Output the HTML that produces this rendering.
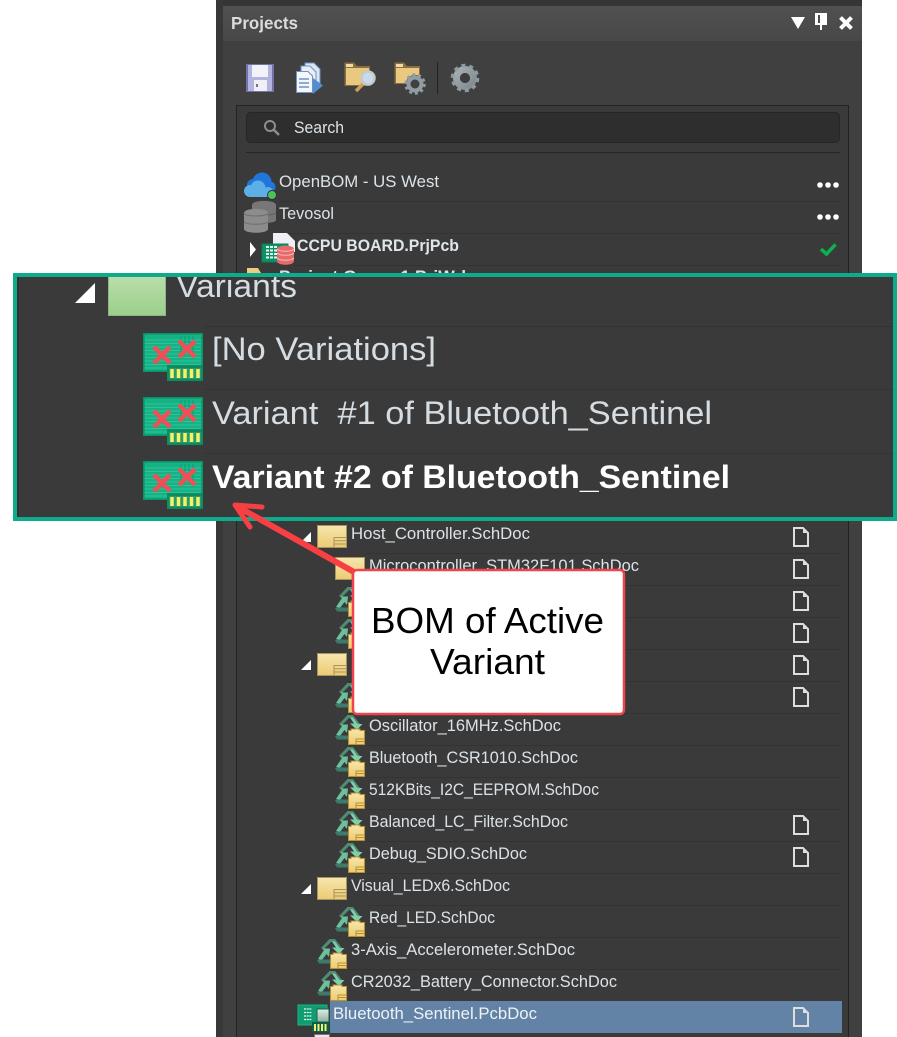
<!DOCTYPE html>
<html><head><meta charset="utf-8"><style>
html,body{margin:0;padding:0;background:#fff;width:897px;height:1037px;overflow:hidden}
svg{display:block}
text{font-family:"Liberation Sans",sans-serif}
.t{font-size:16.5px;fill:#dbe3e8}
.z{font-size:32px;fill:#d5dde2}
.l{stroke:#333;stroke-width:1}
</style></head><body>
<svg width="897" height="1037" viewBox="0 0 897 1037" xmlns="http://www.w3.org/2000/svg">
<defs>
<linearGradient id="ft" x1="0" y1="0" x2="0" y2="1"><stop offset="0" stop-color="#f7e6ae"/><stop offset="1" stop-color="#eccb72"/></linearGradient>
<linearGradient id="gf" x1="0" y1="0" x2="0" y2="1"><stop offset="0" stop-color="#c0dfb0"/><stop offset="1" stop-color="#9ad08a"/></linearGradient>
<linearGradient id="hd" x1="0" y1="0" x2="0" y2="1"><stop offset="0" stop-color="#505050"/><stop offset="1" stop-color="#484848"/></linearGradient>
<linearGradient id="gr" x1="0" y1="0" x2="1" y2="1"><stop offset="0" stop-color="#a5aeb2"/><stop offset="1" stop-color="#7f8a8f"/></linearGradient>
<linearGradient id="chip" x1="0" y1="0" x2="0" y2="1"><stop offset="0" stop-color="#dfeee6"/><stop offset="1" stop-color="#8fb09f"/></linearGradient>
<g id="doc"><path d="M1 1H10L15 6V19H1Z" fill="none" stroke="#dedede" stroke-width="2"/><path d="M10 1V6H15Z" fill="#dedede"/></g>
<g id="fold"><rect x=".5" y=".5" width="29" height="22" fill="url(#ft)" stroke="#a8945e"/><path d="M17 22.5V12.5H29.5M17 15.800H29.500M17 19H29.500" fill="none" stroke="#a8945e"/></g>
<g id="rec">
<path d="M5 9L8 10L15 3H19L23 10L26 9L19 0H13.500Z" fill="#4f8c76"/>
<path d="M16 2.500H19L23.500 9H28.500L23 15L16 8.500H20Z" fill="#7ed0a8"/>
<path d="M2 20L8 11L5.500 9.500H14L13 18L10.500 15L6 21Z" fill="#6cc09a"/>
<path d="M1 21L3 24.500H14V20.500H4Z" fill="#3f7a68"/>
<path d="M14.500 15.500H17V14H26V15.500H30.500V29.500H14.500Z" fill="url(#ft)" stroke="#b8902e"/>
<path d="M22 29V24H30M22 26.500H30" fill="none" stroke="#b8902e"/>
</g>
<g id="bom">
<path d="M0 0H60V48H24V39H0Z" fill="#0a9268"/>
<rect x="1.500" y="1.500" width="57" height="36" fill="#14b386"/>
<path d="M2 7H58M2 10.500H58M2 14H58M2 17.500H58M2 21H58M2 24.500H58M2 28H58M2 31.500H58M2 35H58" stroke="#35c096" stroke-width="1"/>
<path d="M38 3V22M42 3V22M46 3V22M50 3V22" stroke="#0e9a72" stroke-width="1"/>
<rect x="24" y="32" width="36" height="16" fill="#0a8d62"/>
<rect x="26" y="35" width="32" height="11" fill="#2c9a66"/>
<path d="M29 36V45M35.500 36V45M42 36V45M48.500 36V45M55 36V45" stroke="#f3f26a" stroke-width="3.500"/>
<path d="M11 14L27 30M27 14L11 30M36 8L52 24M52 8L36 24" stroke="#ee5055" stroke-width="4.500"/>
</g>
<clipPath id="zc"><rect x="17" y="277" width="876" height="240"/></clipPath>
</defs>

<!-- panel -->
<rect x="216" y="0" width="646" height="1037" fill="#404040"/>
<rect x="216" y="0" width="646" height="6" fill="#353535"/>
<rect x="216" y="0" width="7" height="1037" fill="#383838"/>
<rect x="223" y="6" width="639" height="35" fill="url(#hd)"/>
<text x="231" y="29" font-size="17.500" font-weight="bold" fill="#dcdcdc" textLength="67" lengthAdjust="spacingAndGlyphs">Projects</text>
<path d="M791 17H805L798 29Z" fill="#fff"/>
<path d="M815 13H827V25H822V30H820V25H815ZM818 15V23H820V15Z" fill="#fff"/>
<path d="M840.500 17.500L851.500 28.500M851.500 17.500L840.500 28.500" stroke="#fff" stroke-width="4"/>

<!-- toolbar -->
<g>
<rect x="246" y="64" width="28" height="28" fill="#7272a8"/>
<rect x="248" y="65" width="24" height="26" fill="#b3b3e0"/>
<rect x="252" y="65" width="16" height="12" fill="#f3f3f7"/>
<rect x="254" y="80" width="13" height="11" fill="#f0f0f4"/>
<rect x="256" y="84" width="2" height="3" fill="#7070a8"/>
</g>
<g>
<path d="M305 63H314L320 69V85H305Z" fill="#dfe6f2" stroke="#6d92c4"/>
<path d="M301 66H310L316 72V88H301Z" fill="#e8edf6" stroke="#6d92c4"/>
<path d="M296.500 71.500H308L312.500 76V92.500H296.500Z" fill="#f4f6fb" stroke="#6d92c4"/>
<path d="M299 79H309M299 83H309M299 87H309" stroke="#6d92c4" stroke-width="1.500"/>
<path d="M313 78L323 85.500L313 94Z" fill="#4f8fd0"/>
</g>
<g>
<path d="M344.500 62.500H354L357 66H370V86H344.500Z" fill="#8a6f3f"/>
<rect x="346" y="68" width="23" height="17" fill="#e9c87f"/>
<rect x="346" y="64" width="7" height="3" fill="#f0d9a6"/>
<path d="M363 84L356 91" stroke="#c9a25a" stroke-width="3.500"/>
<circle cx="368" cy="78" r="6.500" fill="#c6dcee" stroke="#c9c9c9" stroke-width="2.500"/>
</g>
<g>
<path d="M394.500 62.500H404L407 66H420V84H394.500Z" fill="#8a6f3f"/>
<rect x="396" y="68" width="23" height="15" fill="#e9c87f"/>
<rect x="396" y="64" width="7" height="3" fill="#f0d9a6"/>
<circle cx="415" cy="84" r="9" fill="#404040"/>
<circle cx="415" cy="84" r="6.500" fill="none" stroke="#929da2" stroke-width="4"/>
<circle cx="415" cy="84" r="9.500" fill="none" stroke="#929da2" stroke-width="2.500" stroke-dasharray="3 2.970"/>
</g>
<rect x="437" y="62" width="1" height="32" fill="#222"/>
<g>
<circle cx="465" cy="78" r="8.500" fill="none" stroke="url(#gr)" stroke-width="7"/>
<circle cx="465" cy="78" r="12.500" fill="none" stroke="#8f9a9f" stroke-width="3.500" stroke-dasharray="4 3.850"/>
<circle cx="465" cy="78" r="5" fill="#3c3c3c"/>
</g>

<!-- inner box -->
<rect x="236.500" y="105.500" width="612" height="940" fill="#3a3a3a" stroke="#222"/>
<rect x="246.500" y="112.500" width="593" height="30" rx="4" fill="#2e2e2e" stroke="#262626"/>
<circle cx="270" cy="126" r="5" fill="none" stroke="#8e8e8e" stroke-width="2"/>
<path d="M274 130L279 135" stroke="#8e8e8e" stroke-width="2.500"/>
<text x="294" y="133" class="t" textLength="50" lengthAdjust="spacingAndGlyphs">Search</text>
<rect x="246" y="152" width="594" height="1" fill="#262626"/>

<!-- top rows -->
<path class="l" d="M279 201.500H842M279 233.500H842M294 265.500H842"/>
<g fill="#2176dc"><circle cx="262" cy="182" r="9.500"/><circle cx="253" cy="185" r="6"/><circle cx="270" cy="187" r="5.500"/></g>
<g fill="#5cb0e6"><circle cx="250" cy="191" r="6"/><circle cx="258" cy="188" r="7.500"/><rect x="250" y="188" width="20" height="9"/><circle cx="268" cy="192" r="5"/></g>
<circle cx="272" cy="195" r="4.500" fill="#4cc05a" stroke="#333"/>
<text x="279" y="187" class="t" textLength="160" lengthAdjust="spacingAndGlyphs">OpenBOM - US West</text>
<text x="279" y="219" class="t" textLength="55" lengthAdjust="spacingAndGlyphs">Tevosol</text>
<path d="M252 205c0-5.500 24-5.500 24 0v15c0 4-24 4-24 0Z" fill="#777"/>
<path d="M252 213c4 3 20 3 24 0" fill="none" stroke="#5e5e5e"/>
<path d="M244 213c0-5.500 24-5.500 24 0v16c0 5-24 5-24 0Z" fill="#8c8c8c"/>
<path d="M244 213c0 4 24 4 24 0" fill="none" stroke="#6e6e6e"/>
<path d="M244 222c4 3 20 3 24 0" fill="none" stroke="#6e6e6e"/>
<path d="M273 233H287L295 241V252H273Z" fill="#eef0f6"/>
<path d="M250 242L256 249.500L250 257Z" fill="#fff"/>
<rect x="262" y="244" width="26" height="18" fill="#0d9268" stroke="#0b7e5c"/>
<path d="M266 247H277M266 250.500H277M266 254H277M266 257.500H277" stroke="#e6f6ec" stroke-width="2" stroke-dasharray="3 1"/>
<path d="M277 249c0-4.500 17-4.500 17 0v12c0 5-17 5-17 0Z" fill="#e66a6a"/>
<path d="M277 253c3 3 14 3 17 0M277 258c3 3 14 3 17 0M277 249c3 3 14 3 17 0" fill="none" stroke="#f7b9b9"/>
<text x="297" y="251" font-size="16.500" font-weight="bold" fill="#dfe6ea" textLength="162" lengthAdjust="spacingAndGlyphs">CCPU BOARD.PrjPcb</text>
<path d="M821 249L826.500 254L835.500 244.500" fill="none" stroke="#0cb14b" stroke-width="3.500"/>
<g fill="#fff"><circle cx="820" cy="185" r="2.800"/><circle cx="828" cy="185" r="2.800"/><circle cx="836" cy="185" r="2.800"/><circle cx="820" cy="217" r="2.800"/><circle cx="828" cy="217" r="2.800"/><circle cx="836" cy="217" r="2.800"/></g>
<path d="M247 268H258L261 273H247Z" fill="#eccb85"/>
<text x="279" y="282" class="t" font-weight="bold" textLength="192" lengthAdjust="spacingAndGlyphs">Project Group 1.PrjWrk</text>

<!-- lower separators -->
<path class="l" d="M366 553.500H842M366 585.500H842M366 617.500H842M366 649.500H842M348 681.500H842M366 713.500H842M366 745.500H842M366 777.500H842M366 809.500H842M366 841.500H842M348 873.500H842M366 905.500H842M348 937.500H842M348 969.500H842"/>

<!-- tree icons -->
<path d="M301 542H311V532Z" fill="#fff"/>
<use href="#fold" x="317" y="525"/>
<use href="#fold" x="335" y="557"/>
<use href="#rec" x="334" y="587"/>
<use href="#rec" x="334" y="619"/>
<path d="M301 670H311V660Z" fill="#fff"/>
<use href="#fold" x="317" y="653"/>
<use href="#rec" x="334" y="683"/>
<use href="#rec" x="334" y="715"/>
<use href="#rec" x="334" y="747"/>
<use href="#rec" x="334" y="779"/>
<use href="#rec" x="334" y="811"/>
<use href="#rec" x="334" y="843"/>
<path d="M301 894H311V884Z" fill="#fff"/>
<use href="#fold" x="317" y="877"/>
<use href="#rec" x="334" y="907"/>
<use href="#rec" x="316" y="939"/>
<use href="#rec" x="316" y="971"/>

<!-- tree text -->
<text x="351" y="539" class="t" textLength="179" lengthAdjust="spacingAndGlyphs">Host_Controller.SchDoc</text>
<text x="369" y="571" class="t" textLength="270" lengthAdjust="spacingAndGlyphs">Microcontroller_STM32F101.SchDoc</text>
<text x="369" y="731" class="t" textLength="192" lengthAdjust="spacingAndGlyphs">Oscillator_16MHz.SchDoc</text>
<text x="369" y="763" class="t" textLength="209" lengthAdjust="spacingAndGlyphs">Bluetooth_CSR1010.SchDoc</text>
<text x="369" y="795" class="t" textLength="230" lengthAdjust="spacingAndGlyphs">512KBits_I2C_EEPROM.SchDoc</text>
<text x="369" y="827" class="t" textLength="199" lengthAdjust="spacingAndGlyphs">Balanced_LC_Filter.SchDoc</text>
<text x="369" y="859" class="t" textLength="158" lengthAdjust="spacingAndGlyphs">Debug_SDIO.SchDoc</text>
<text x="351" y="891" class="t" textLength="159" lengthAdjust="spacingAndGlyphs">Visual_LEDx6.SchDoc</text>
<text x="369" y="923" class="t" textLength="126" lengthAdjust="spacingAndGlyphs">Red_LED.SchDoc</text>
<text x="351" y="955" class="t" textLength="224" lengthAdjust="spacingAndGlyphs">3-Axis_Accelerometer.SchDoc</text>
<text x="351" y="987" class="t" textLength="266" lengthAdjust="spacingAndGlyphs">CR2032_Battery_Connector.SchDoc</text>

<!-- selected -->
<rect x="330" y="1001" width="512" height="32" fill="#6283a5"/>
<rect x="298" y="1005" width="29" height="20" fill="#0e9c70" stroke="#17b687" stroke-width="1"/>
<path d="M304 1009H312M304 1012.500H312M304 1016H312M304 1019.500H312" stroke="#e2f6ea" stroke-width="1.300" stroke-dasharray="2 .7"/>
<rect x="317" y="1009" width="12" height="13" fill="url(#chip)" stroke="#1e5f4a"/>
<rect x="312" y="1022" width="17" height="10" fill="#0b5f44"/>
<path d="M315 1024V1031M318.500 1024V1031M322 1024V1031M325.500 1024V1031" stroke="#eef07a" stroke-width="2"/>
<text x="333" y="1019" class="t" style="fill:#eef2f6" textLength="204" lengthAdjust="spacingAndGlyphs">Bluetooth_Sentinel.PcbDoc</text>
<rect x="314.500" y="1034.500" width="15" height="4" fill="#e8e8f0" stroke="#777"/>

<!-- doc icons -->
<use href="#doc" x="793" y="527"/><use href="#doc" x="793" y="559"/><use href="#doc" x="793" y="591"/><use href="#doc" x="793" y="623"/><use href="#doc" x="793" y="655"/><use href="#doc" x="793" y="687"/><use href="#doc" x="793" y="815"/><use href="#doc" x="793" y="847"/><use href="#doc" x="793" y="1007"/>

<!-- zoom box -->
<rect x="15" y="275" width="880" height="244" fill="#3a3a3a" stroke="#0bab8b" stroke-width="4"/>
<rect x="17" y="277" width="2" height="240" fill="#303030"/>
<g clip-path="url(#zc)">
<path class="l" d="M205 326.500H893M205 389.500H893M205 453.500H893"/>
<path d="M75 303H95V283Z" fill="#fff"/>
<rect x="108.500" y="270" width="57" height="45.500" fill="url(#gf)" stroke="#8eb587"/>
<text x="176" y="297" class="z" textLength="121" lengthAdjust="spacingAndGlyphs">Variants</text>
<use href="#bom" x="143" y="333"/>
<use href="#bom" x="143" y="397"/>
<use href="#bom" x="143" y="461"/>
<text x="212" y="360" class="z" textLength="224" lengthAdjust="spacingAndGlyphs">[No Variations]</text>
<text x="212" y="424" class="z" xml:space="preserve" textLength="500" lengthAdjust="spacingAndGlyphs">Variant  #1 of Bluetooth_Sentinel</text>
<text x="212" y="488" font-size="32" font-weight="bold" fill="#fff" textLength="518" lengthAdjust="spacingAndGlyphs">Variant #2 of Bluetooth_Sentinel</text>
</g>

<!-- arrow -->
<path d="M238 507L354 572" stroke="#f84044" stroke-width="6" fill="none"/>
<path d="M262 507L235 505L250 527" stroke="#f84044" stroke-width="5" fill="none" stroke-linecap="round" stroke-linejoin="round"/>

<!-- callout -->
<rect x="353" y="570" width="271" height="144" rx="4" fill="#fff" stroke="#f0444a" stroke-width="2.500"/>
<text x="487.500" y="633" font-size="36" fill="#000" text-anchor="middle" textLength="233" lengthAdjust="spacingAndGlyphs">BOM of Active</text>
<text x="487.500" y="674" font-size="36" fill="#000" text-anchor="middle" textLength="115" lengthAdjust="spacingAndGlyphs">Variant</text>
</svg>
</body></html>
